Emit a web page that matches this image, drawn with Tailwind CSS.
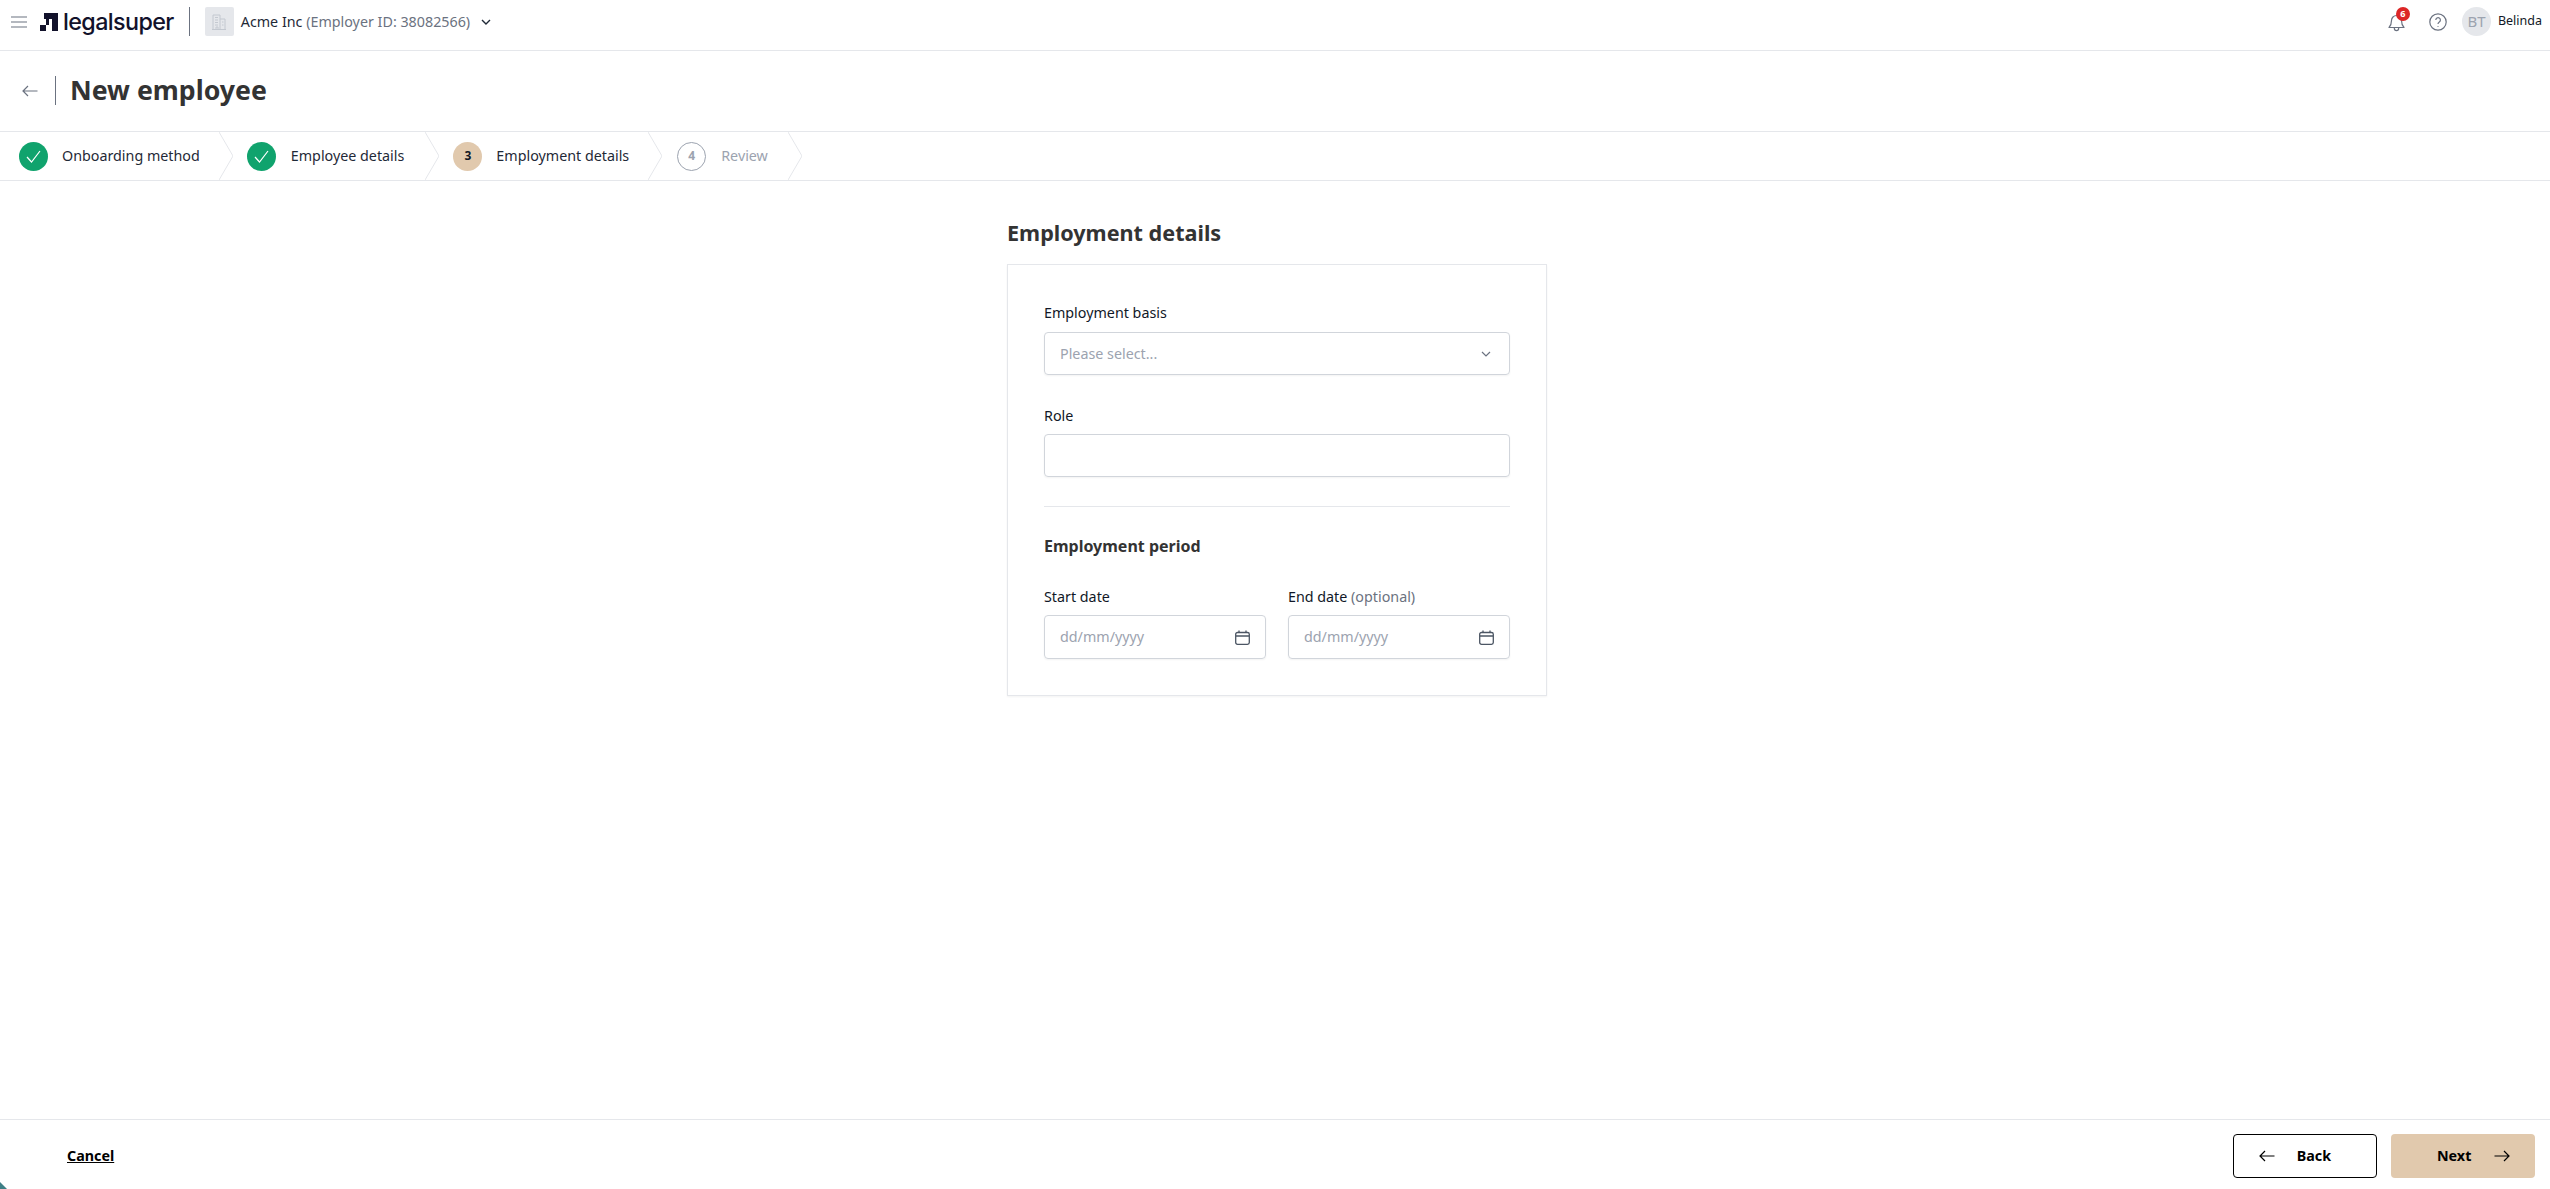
<!DOCTYPE html>
<html lang="en">
<head>
<meta charset="utf-8">
<title>New employee</title>
<script src="https://cdn.jsdelivr.net/npm/@tailwindcss/browser@4"></script>
</head>
<body class="bg-white">
<div class="relative flex flex-col h-[1189px] w-full overflow-hidden font-['Noto_Sans','Open_Sans',sans-serif] text-[14.300px] text-[#111827]">

  <!-- Top bar -->
  <header class="flex items-start justify-between h-[51px] shrink-0 border-b border-[#e5e7eb] pt-[7px] pr-[8px] pl-[11px]">
    <div class="flex items-center h-[29px]">
      <svg class="w-[16px] h-[12px] text-[#6b7280]" viewBox="0 0 16 12" fill="none" stroke="currentColor" stroke-width="1.2"><path d="M0 1h16M0 6h16M0 11h16"/></svg>
      <svg class="ml-[13px] w-[18px] h-[18px] text-[#12122b]" viewBox="0 0 18 18" fill="currentColor"><path d="M4 0h14v18h-6V6H9v6H6V6H4z"/><path d="M0 12h6v6H0z"/></svg>
      <span class="ml-[5px] font-['Inter',sans-serif] font-medium text-[23.300px] leading-[29px] tracking-[-0.6px] text-[#12122b]">legalsuper</span>
      <div class="ml-[15px] w-px h-[29px] bg-[#6b7280]"></div>
      <div class="ml-[15px] flex items-center justify-center w-[29px] h-[29px] rounded-[2px] bg-[#e5e7eb]">
        <svg class="w-[16px] h-[16px] text-[#c3c8d0]" viewBox="0 0 16 16" fill="none" stroke="currentColor" stroke-width="1"><path d="M1 15.500h14M2 15.500V1h7v14.500M9 5h5v10.500M4 3.500h3M4 6h3M4 8.500h3M4 11h3M11 8h1.500M11 11h1.500M5 15v-2h2v2"/></svg>
      </div>
      <span class="ml-[7px] whitespace-nowrap text-[#1f2937]">Acme Inc <span class="text-[#6b7280]">(Employer ID: 38082566)</span></span>
      <svg class="ml-[11px] w-[10px] h-[6px] text-[#1f2937]" viewBox="0 0 10 6" fill="none" stroke="currentColor" stroke-width="1.400"><path d="M1 1l4 4 4-4"/></svg>
    </div>
    <div class="flex items-center h-[29px]">
      <div class="relative w-[17px] h-[18px]">
        <svg class="absolute left-0 top-[1px] w-[17px] h-[18px] text-[#6b7280]" viewBox="0 0 17 18" fill="none" stroke="currentColor" stroke-width="1.200" stroke-linejoin="round"><path d="M8.500 1.500a5 5 0 0 0-5 5c0 4-1 5.500-2.500 7h15c-1.500-1.500-2.500-3-2.500-7a5 5 0 0 0-5-5zM6.300 14c0 1.500 1 2.700 2.200 2.700s2.200-1.200 2.200-2.700"/></svg>
        <span class="absolute left-[8px] top-[-6px] flex items-center justify-center w-[14px] h-[14px] rounded-full bg-[#dc2626] text-white text-[9px] font-bold leading-none">6</span>
      </div>
      <svg class="ml-[24px] w-[18px] h-[18px] text-[#6b7280]" viewBox="0 0 18 18" fill="none" stroke="currentColor" stroke-width="1.200"><circle cx="9" cy="9" r="8.200"/><path d="M6.800 7a2.300 2.300 0 1 1 3.500 2c-.8.500-1.300 1-1.300 2M9 13v.8"/></svg>
      <div class="ml-[15px] flex items-center justify-center w-[29px] h-[29px] rounded-full bg-[#e5e7eb] text-[15px] text-[#9ca3af]">BT</div>
      <span class="ml-[7px] text-[12.500px] text-[#111827]">Belinda</span>
    </div>
  </header>

  <!-- Title row -->
  <div class="flex items-center h-[80px] shrink-0 pl-[22px] pb-[1px]">
    <svg class="w-[16px] h-[12px] text-[#6b7280]" viewBox="0 0 16 12" fill="none" stroke="currentColor" stroke-width="1.200"><path d="M15.500 6H.8M6 1L1 6l5 5"/></svg>
    <div class="ml-[17px] w-px h-[29px] bg-[#6b7280]"></div>
    <h1 class="ml-[14px] text-[26.700px] font-bold text-[#333333]">New employee</h1>
  </div>

  <!-- Steps -->
  <nav class="flex h-[50px] shrink-0 border-y border-[#e5e7eb]">
    <div class="relative flex items-center gap-[14px] pl-[19px] pr-[19px]">
      <span class="flex items-center justify-center w-[29px] h-[29px] rounded-full bg-[#10a36d]"><svg class="w-[15px] h-[13px] text-white" viewBox="0 0 15 13" fill="none" stroke="currentColor" stroke-width="1.200"><path d="M1 7l4.500 5L14 1"/></svg></span>
      <span class="whitespace-nowrap text-[#1f2937]">Onboarding method</span>
      <svg class="absolute -right-[14px] top-0 z-10 w-[14px] h-[48px] text-[#e5e7eb]" viewBox="0 0 14 48" fill="none" stroke="currentColor"><path d="M0 0l14 24L0 48"/></svg>
    </div>
    <div class="relative flex items-center gap-[15px] pl-[28px] pr-[21px]">
      <span class="flex items-center justify-center w-[29px] h-[29px] rounded-full bg-[#10a36d]"><svg class="w-[15px] h-[13px] text-white" viewBox="0 0 15 13" fill="none" stroke="currentColor" stroke-width="1.200"><path d="M1 7l4.500 5L14 1"/></svg></span>
      <span class="whitespace-nowrap text-[#1f2937]">Employee details</span>
      <svg class="absolute -right-[14px] top-0 z-10 w-[14px] h-[48px] text-[#e5e7eb]" viewBox="0 0 14 48" fill="none" stroke="currentColor"><path d="M0 0l14 24L0 48"/></svg>
    </div>
    <div class="relative flex items-center gap-[14px] pl-[28px] pr-[19px]">
      <span class="flex items-center justify-center w-[29px] h-[29px] rounded-full bg-[#e1c9ad] text-[12px] font-bold text-[#111827]">3</span>
      <span class="whitespace-nowrap text-[#1f2937]">Employment details</span>
      <svg class="absolute -right-[14px] top-0 z-10 w-[14px] h-[48px] text-[#e5e7eb]" viewBox="0 0 14 48" fill="none" stroke="currentColor"><path d="M0 0l14 24L0 48"/></svg>
    </div>
    <div class="relative flex items-center gap-[15px] pl-[29px] pr-[20px]">
      <span class="flex items-center justify-center w-[29px] h-[29px] rounded-full border border-[#9ca3af] text-[12px] font-bold text-[#9ca3af]">4</span>
      <span class="whitespace-nowrap text-[#9ca3af]">Review</span>
      <svg class="absolute -right-[14px] top-0 z-10 w-[14px] h-[48px] text-[#e5e7eb]" viewBox="0 0 14 48" fill="none" stroke="currentColor"><path d="M0 0l14 24L0 48"/></svg>
    </div>
  </nav>

  <!-- Main -->
  <main class="flex-1 flex justify-center pl-[4px] pt-[38px]">
    <div class="w-[540px]">
      <h2 class="text-[21.600px] leading-[28px] font-bold text-[#333333]">Employment details</h2>
      <div class="mt-[17px] h-[432px] border border-[#e5e7eb] shadow-xs px-[36px] pt-[37px]">
        <label class="block leading-[22px] text-[#111827]">Employment basis</label>
        <div class="mt-[8px] flex items-center justify-between h-[43px] rounded-[4px] border border-[#d1d5db] shadow-xs pl-[15px] pr-[18px]">
          <span class="text-[#9ca3af]">Please select...</span>
          <svg class="w-[10px] h-[6px] text-[#6b7280]" viewBox="0 0 10 6" fill="none" stroke="currentColor" stroke-width="1.200"><path d="M1 1l4 4 4-4"/></svg>
        </div>
        <label class="mt-[30px] block leading-[22px] text-[#111827]">Role</label>
        <div class="mt-[7px] h-[43px] rounded-[4px] border border-[#d1d5db] shadow-xs"></div>
        <div class="mt-[29px] border-t border-[#e5e7eb]"></div>
        <h3 class="mt-[27px] text-[16px] leading-[24px] font-bold text-[#333333]">Employment period</h3>
        <div class="mt-[28px] grid grid-cols-2 gap-[22px]">
          <div>
            <label class="block leading-[22px] text-[#111827]">Start date</label>
            <div class="mt-[7px] flex items-center justify-between h-[44px] rounded-[4px] border border-[#d1d5db] shadow-xs pl-[15px] pr-[15px]">
              <span class="-mt-[1px] text-[#9ca3af]">dd/mm/yyyy</span>
              <svg class="w-[15px] h-[15px] text-[#4b5563]" viewBox="0 0 15 15" fill="none" stroke="currentColor" stroke-width="1.300"><rect x=".7" y="2.500" width="13.600" height="11.800" rx="1.800"/><path d="M1 6h13M4 .5v2M11 .5v2"/></svg>
            </div>
          </div>
          <div>
            <label class="block leading-[22px] text-[#111827]">End date <span class="text-[#6b7280]">(optional)</span></label>
            <div class="mt-[7px] flex items-center justify-between h-[44px] rounded-[4px] border border-[#d1d5db] shadow-xs pl-[15px] pr-[15px]">
              <span class="-mt-[1px] text-[#9ca3af]">dd/mm/yyyy</span>
              <svg class="w-[15px] h-[15px] text-[#4b5563]" viewBox="0 0 15 15" fill="none" stroke="currentColor" stroke-width="1.300"><rect x=".7" y="2.500" width="13.600" height="11.800" rx="1.800"/><path d="M1 6h13M4 .5v2M11 .5v2"/></svg>
            </div>
          </div>
        </div>
      </div>
    </div>
  </main>

  <!-- Footer -->
  <footer class="flex items-center justify-between h-[70px] shrink-0 border-t border-[#e5e7eb] pt-[2px] pl-[67px] pr-[15px]">
    <a class="font-bold underline text-black">Cancel</a>
    <div class="flex gap-[14px]">
      <button class="flex items-center justify-between w-[144px] h-[44px] rounded-[4px] border border-black pl-[25px] pr-[45px] font-bold text-black">
        <svg class="w-[16px] h-[12px]" viewBox="0 0 16 12" fill="none" stroke="currentColor" stroke-width="1.200"><path d="M15.500 6H.8M6 1L1 6l5 5"/></svg>
        <span>Back</span>
      </button>
      <button class="flex items-center justify-between w-[144px] h-[44px] rounded-[4px] bg-[#e1c9ad] pl-[46px] pr-[25px] font-bold text-black">
        <span>Next</span>
        <svg class="w-[16px] h-[12px]" viewBox="0 0 16 12" fill="none" stroke="currentColor" stroke-width="1.200"><path d="M.5 6h14.700M10 1l5 5-5 5"/></svg>
      </button>
    </div>
  </footer>

  <div class="absolute left-0 bottom-0 w-0 h-0 border-l-[7px] border-t-[7px] border-l-[#3f7f86] border-t-transparent"></div>
</div>
</body>
</html>
